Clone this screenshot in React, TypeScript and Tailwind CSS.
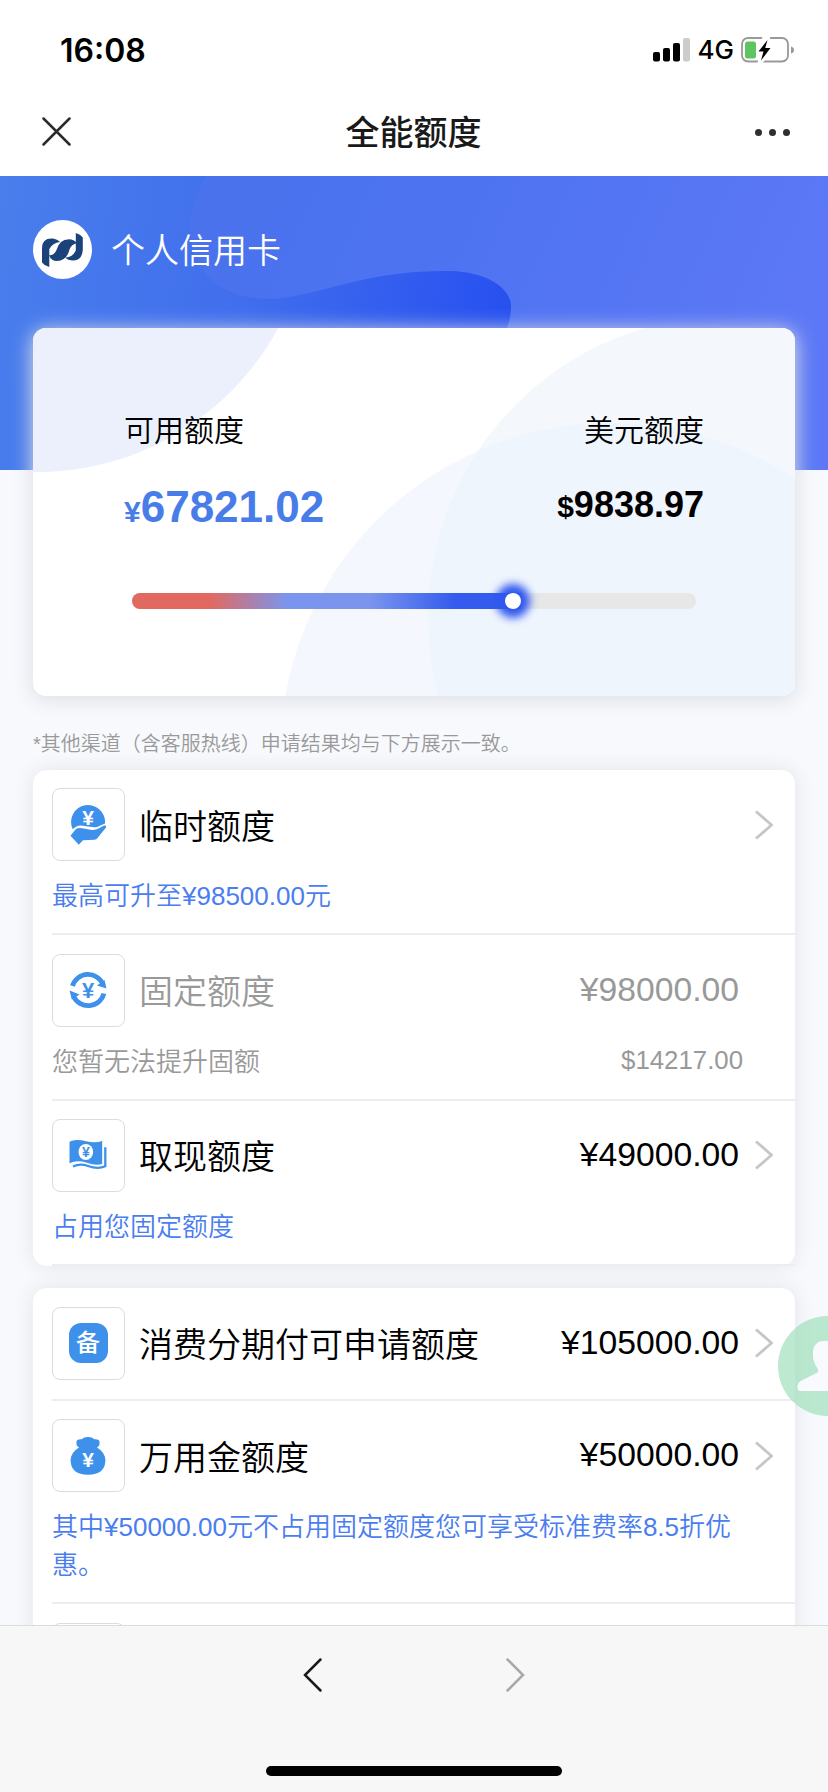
import React from "react";

const BLUE = "#3e91ea";

type Row = {
  icon: React.ReactNode;
  title: string;
  amount?: string;
  note?: string;
  noteAmount?: string;
  disabled?: boolean;
};

function YuanSign({ x, y, size, fill }: { x: number; y: number; size: number; fill: string }) {
  return (
    <text
      x={x}
      y={y}
      fontSize={size}
      fill={fill}
      textAnchor="middle"
      fontWeight="bold"
      fontFamily="Liberation Sans, sans-serif"
    >
      ¥
    </text>
  );
}

function HandIcon() {
  return (
    <svg width="40" height="42" viewBox="0 0 40 42">
      <path
        d="M4.700 25.300A17 17 0 1 1 37 19.500L29 23Q26 23.500 22 22.800L13 21.500Q8 21.500 4.700 25.300Z"
        fill={BLUE}
      />
      <YuanSign x={20} y={21.2} size={21} fill="#fff" />
      <path
        d="M2.500 31.700L7.500 25.500Q10 23.500 14 24.200L24 26Q28 26.200 31.500 24L36 21.500Q39 20.900 38 23.500L29.500 34Q28.500 35.600 26.500 35.800L15 36.200L10.800 40.700Z"
        fill={BLUE}
      />
    </svg>
  );
}

function CycleIcon() {
  return (
    <svg width="40" height="40" viewBox="0 0 40 40">
      <g fill="none" stroke={BLUE} strokeWidth="4.800">
        <path d="M4.500 16A16.200 16.200 0 0 1 35 14.500" />
        <path d="M35.900 23.500A16.200 16.200 0 0 1 5.400 26" />
      </g>
      <path d="M36.500 10L38.500 18.500L29 15.500Z" fill={BLUE} />
      <path d="M1.600 20.500L11.500 24.500L3.800 29.500Z" fill={BLUE} />
      <YuanSign x={20.2} y={27.5} size={22} fill={BLUE} />
    </svg>
  );
}

function CashIcon() {
  return (
    <svg width="40" height="32" viewBox="0 0 40 32">
      <path
        d="M1.500 3.500Q1.500 2.500 3 2Q10 0 18 2.300Q27 4.500 34.200 2V25Q28 27 18 23.500Q9 20.500 1.500 24.300Z"
        fill={BLUE}
      />
      <ellipse cx="17.800" cy="13" rx="7.300" ry="8" fill="#fff" />
      <YuanSign x={17.8} y={17.8} size={14} fill={BLUE} />
      <path d="M5 27.500Q12 24 20 27Q30 30.500 37.300 27.300V8.300" fill="none" stroke={BLUE} strokeWidth="2.300" />
    </svg>
  );
}

function ReserveIcon() {
  return (
    <span className="flex h-10 w-[39px] items-center justify-center rounded-[12px] bg-[#3e91ea] text-[24px] leading-none font-medium text-white">
      备
    </span>
  );
}

function MoneyBagIcon() {
  return (
    <svg width="40" height="42" viewBox="0 0 40 42">
      <path
        d="M8.500 6.500Q9 4 13.500 4.200Q16 2 20 2Q24 2 26.500 4.200Q31 4 31.500 6.500V9.500Q31.500 11 29 12.500Q37.400 17.500 37.400 25.500Q37 39.700 20 39.700Q3 39.700 2.600 25.500Q2.600 17.500 11 12.500Q8.500 11 8.500 9.500Z"
        fill={BLUE}
      />
      <YuanSign x={20} y={31.5} size={21} fill="#fff" />
    </svg>
  );
}

function Chevron() {
  return (
    <svg width="20" height="32" viewBox="0 0 20 32" fill="none" stroke="#c6c6ca" strokeWidth="2.800">
      <path d="M3 2.500L18.500 16L3 29.500" />
    </svg>
  );
}

function StatusBar() {
  return (
    <div className="flex h-[88px] items-center pt-3 pr-[33px] pl-[60px] font-[Inter]">
      <span className="mt-px text-[32px] leading-none font-semibold text-black">16:08</span>
      <svg className="ml-auto" width="38" height="24" viewBox="0 0 38 24">
        <rect x="0" y="14" width="7" height="9.500" rx="2" />
        <rect x="10" y="10" width="7" height="13.500" rx="2" />
        <rect x="20" y="5" width="7" height="18.500" rx="2" />
        <rect x="30" y="0" width="7" height="23.500" rx="2" fill="#ccc" />
      </svg>
      <span className="ml-[7px] text-[26px] leading-none font-medium text-black">4G</span>
      <svg className="ml-[7px]" width="54" height="28" viewBox="0 0 54 28">
        <rect x="1" y="2" width="46" height="23.500" rx="6" fill="none" stroke="#999" strokeWidth="1.800" />
        <path d="M50 10.500Q53 11.500 53 14Q53 16.500 50 17.500Z" fill="#999" />
        <rect x="4" y="5.500" width="11" height="17" rx="2.500" fill="#5ec45f" />
        <path d="M29.500 0L22 0L14.500 16H20L16 28H21L34 11H27Z" fill="#fff" />
        <path d="M26.500 4L17.500 15.500H22.500L20 24.500L29.500 12H24.200Z" />
      </svg>
    </div>
  );
}

function NavBar() {
  return (
    <div className="flex h-[88px] items-center justify-between pr-[38px] pl-[41px]">
      <svg width="31" height="31" viewBox="0 0 31 31" stroke="#2b2b2b" strokeWidth="2.500" strokeLinecap="round">
        <path d="M2.500 1.500L28.500 27.500M28.500 1.500L2.500 27.500" />
      </svg>
      <h1 className="mt-px text-[34px] leading-none font-medium text-[#191919]">全能额度</h1>
      <div className="flex gap-[7px]">
        <i className="size-[7px] rounded-full bg-[#2f2f2f]" />
        <i className="size-[7px] rounded-full bg-[#2f2f2f]" />
        <i className="size-[7px] rounded-full bg-[#2f2f2f]" />
      </div>
    </div>
  );
}

function BankLogo() {
  return (
    <svg width="59" height="59" viewBox="33 220 59 59">
      <circle cx="62.500" cy="249.500" r="29.500" fill="#fff" />
      <g fill="#1b4379">
        <path d="M42 262.500V248Q42 238 52.500 238.500Q57.500 239 60 242Q52.500 243 49.300 249V267Q44.500 266 42 262.500Z" />
        <path d="M49 255Q54 256 56.500 250Q59 239.500 69 239.200Q74 239.200 77 243.300Q71.500 244 69.500 249.500Q67 260.500 57 261Q51 261 49 255Z" />
        <path d="M75.800 233Q80.500 234 82.800 237.500V250Q82 260.200 73.500 260.500Q67.500 260.500 65.300 257.500Q73 257 75.800 250.500Z" />
      </g>
    </svg>
  );
}

function Hero() {
  return (
    <div className="relative h-[294px] bg-[linear-gradient(98deg,#497eec_0%,#416eed_30%,#2750f0_61%)]">
      <svg className="absolute inset-0" width="828" height="294" viewBox="0 176 828 294">
        <defs>
          <linearGradient id="wave" x1="0" y1="0" x2="1" y2="0.200">
            <stop offset="0" stopColor="#4a72ec" />
            <stop offset="0.400" stopColor="#4d73f1" />
            <stop offset="1" stopColor="#5c78f6" />
          </linearGradient>
        </defs>
        <path
          d="M207 176C184 208 184 250 209 278C228 297 262 303 295 296C340 287 380 270 450 271C490 272 511 290 511 306Q511 318 507 328V470H828V176Z"
          fill="url(#wave)"
        />
      </svg>
      <div className="relative flex items-center gap-[19px] pt-[44px] pl-[33px]">
        <BankLogo />
        <span className="mt-[3px] text-[34px] leading-none font-[350] text-white">个人信用卡</span>
      </div>
    </div>
  );
}

function SummaryCard() {
  return (
    <section className="relative mx-[33px] -mt-[142px] h-[368px] rounded-[13px] bg-white shadow-[0_3px_20px_1px_#dddfe4]">
      <svg className="absolute inset-0 rounded-[13px]" width="762" height="368" viewBox="33 328 762 368">
        <circle cx="37" cy="198" r="274" fill="#ebf0fc" />
        <circle cx="729" cy="617" r="301" fill="#f4f8fd" />
        <circle cx="611" cy="754" r="331" fill="#ebf2fd" fillOpacity="0.550" />
      </svg>
      <div className="relative flex justify-between px-[91px] pt-[88px] text-black">
        <div>
          <p className="text-[30px] leading-[30px] font-[350]">可用额度</p>
          <p className="mt-[36px] text-[44px] leading-[50px] font-bold text-[#487ce9]">
            <span className="text-[30px]">¥</span>67821.02
          </p>
        </div>
        <div className="text-right">
          <p className="text-[30px] leading-[30px] font-[350]">美元额度</p>
          <p className="mt-[37px] text-[36px] leading-[44px] font-bold">
            <span className="text-[30px]">$</span>9838.97
          </p>
        </div>
      </div>
      <div className="relative mx-[99px] mt-[56px] h-4 rounded-full bg-[#e7e7e7]">
        <div className="flex h-4 w-[389px] justify-end rounded-l-full bg-[linear-gradient(90deg,#e2695f_20%,#7b95ee_40%,#7b95ee_61%,#345bed_83%)]">
          <i className="size-4 rounded-full bg-white shadow-[0_0_8px_9px_#2f57ee]" />
        </div>
      </div>
    </section>
  );
}

function QuotaRow({ icon, title, amount, note, noteAmount, disabled }: Row) {
  return (
    <li className={`ml-[19px] border-b-2 border-[#ededee] ${note ? "pt-[18.33px] pb-[17px]" : "py-[19px]"}`}>
      <div className={`flex items-center ${disabled ? "text-[#999]" : "text-black"}`}>
        <span className="flex size-[73px] shrink-0 items-center justify-center rounded-[8px] border border-[#dcdcdc] pr-px">
          {icon}
        </span>
        <span className="mt-[4px] ml-[14px] text-[34px] leading-none font-[350]">{title}</span>
        <span className="mr-[14px] mb-px ml-auto text-[33.7px] leading-none">{amount}</span>
        <span className="mr-[22px] w-5">{!disabled && <Chevron />}</span>
      </div>
      {note && (
        <div
          className={`flex justify-between pt-[16px] pr-[52px] pb-px text-[26px] leading-[38px] font-[350] ${
            disabled ? "text-[#999]" : "text-[#4a7df0]"
          }`}
        >
          <p>{note}</p>
          <p className="-mt-[2px] text-[25.8px]">{noteAmount}</p>
        </div>
      )}
    </li>
  );
}

function QuotaList({ rows }: { rows: Row[] }) {
  return (
    <ul className="mx-[33px] rounded-[14px] bg-white shadow-[0_0_20px_#e3e4e8]">
      {rows.map((row) => (
        <QuotaRow key={row.title} {...row} />
      ))}
    </ul>
  );
}

const baseQuotas: Row[] = [
  { icon: <HandIcon />, title: "临时额度", note: "最高可升至¥98500.00元" },
  {
    icon: <CycleIcon />,
    title: "固定额度",
    amount: "¥98000.00",
    note: "您暂无法提升固额",
    noteAmount: "$14217.00",
    disabled: true,
  },
  { icon: <CashIcon />, title: "取现额度", amount: "¥49000.00", note: "占用您固定额度" },
];

const extraQuotas: Row[] = [
  { icon: <ReserveIcon />, title: "消费分期付可申请额度", amount: "¥105000.00" },
  {
    icon: <MoneyBagIcon />,
    title: "万用金额度",
    amount: "¥50000.00",
    note: "其中¥50000.00元不占用固定额度您可享受标准费率8.5折优惠。",
  },
  { icon: null, title: "" },
];

// Floating customer service button, half hidden past the right edge
function ServiceButton() {
  return (
    <svg className="absolute top-[1316px] right-0" width="50" height="100" viewBox="0 0 50 100">
      <path
        d="M50 0A50 50 0 0 0 50 100V75H23Q19.500 75 19.500 71Q19.500 67 23 65L39 57Q41 56 40 53Q35 46 35 38Q35 25 47 25H50Z"
        fill="#9fdfba"
        fillOpacity="0.700"
      />
      <path d="M50 75H23Q19.500 75 19.500 71Q19.500 67 23 65L39 57Q41 56 40 53Q35 46 35 38Q35 25 47 25H50Z" fill="#f9fafd" />
    </svg>
  );
}

function Toolbar() {
  return (
    <footer className="relative flex h-[167px] shrink-0 flex-col items-center border-t border-[#dcdcdc] bg-[#f7f7f7]">
      <div className="flex w-[222px] justify-between pt-[31px]">
        <svg width="20" height="36" viewBox="0 0 20 36" fill="none" stroke="#1a1a1a" strokeWidth="2.500" strokeLinecap="round">
          <path d="M17.500 2.500L2 18L17.500 33.500" />
        </svg>
        <svg width="20" height="36" viewBox="0 0 20 36" fill="none" stroke="#a8a8a8" strokeWidth="2.500" strokeLinecap="round">
          <path d="M2.500 2.500L18 18L2.500 33.500" />
        </svg>
      </div>
      <div className="mt-auto mb-4 h-[10px] w-[296px] rounded-full bg-black" />
    </footer>
  );
}

export default function App() {
  return (
    <div className="relative flex h-[1792px] w-[828px] flex-col overflow-hidden bg-white font-['Liberation_Sans','Noto_Sans_CJK_SC',sans-serif]">
      <StatusBar />
      <NavBar />
      <main className="min-h-0 flex-1 overflow-hidden bg-[#f7f9fd]">
        <Hero />
        <SummaryCard />
        <p className="mt-[33px] mb-[11px] ml-[33px] text-[20px] leading-[30px] font-[350] text-[#999]">
          *其他渠道（含客服热线）申请结果均与下方展示一致。
        </p>
        <div className="flex flex-col gap-[22px]">
          <QuotaList rows={baseQuotas} />
          <QuotaList rows={extraQuotas} />
        </div>
      </main>
      <ServiceButton />
      <Toolbar />
    </div>
  );
}
